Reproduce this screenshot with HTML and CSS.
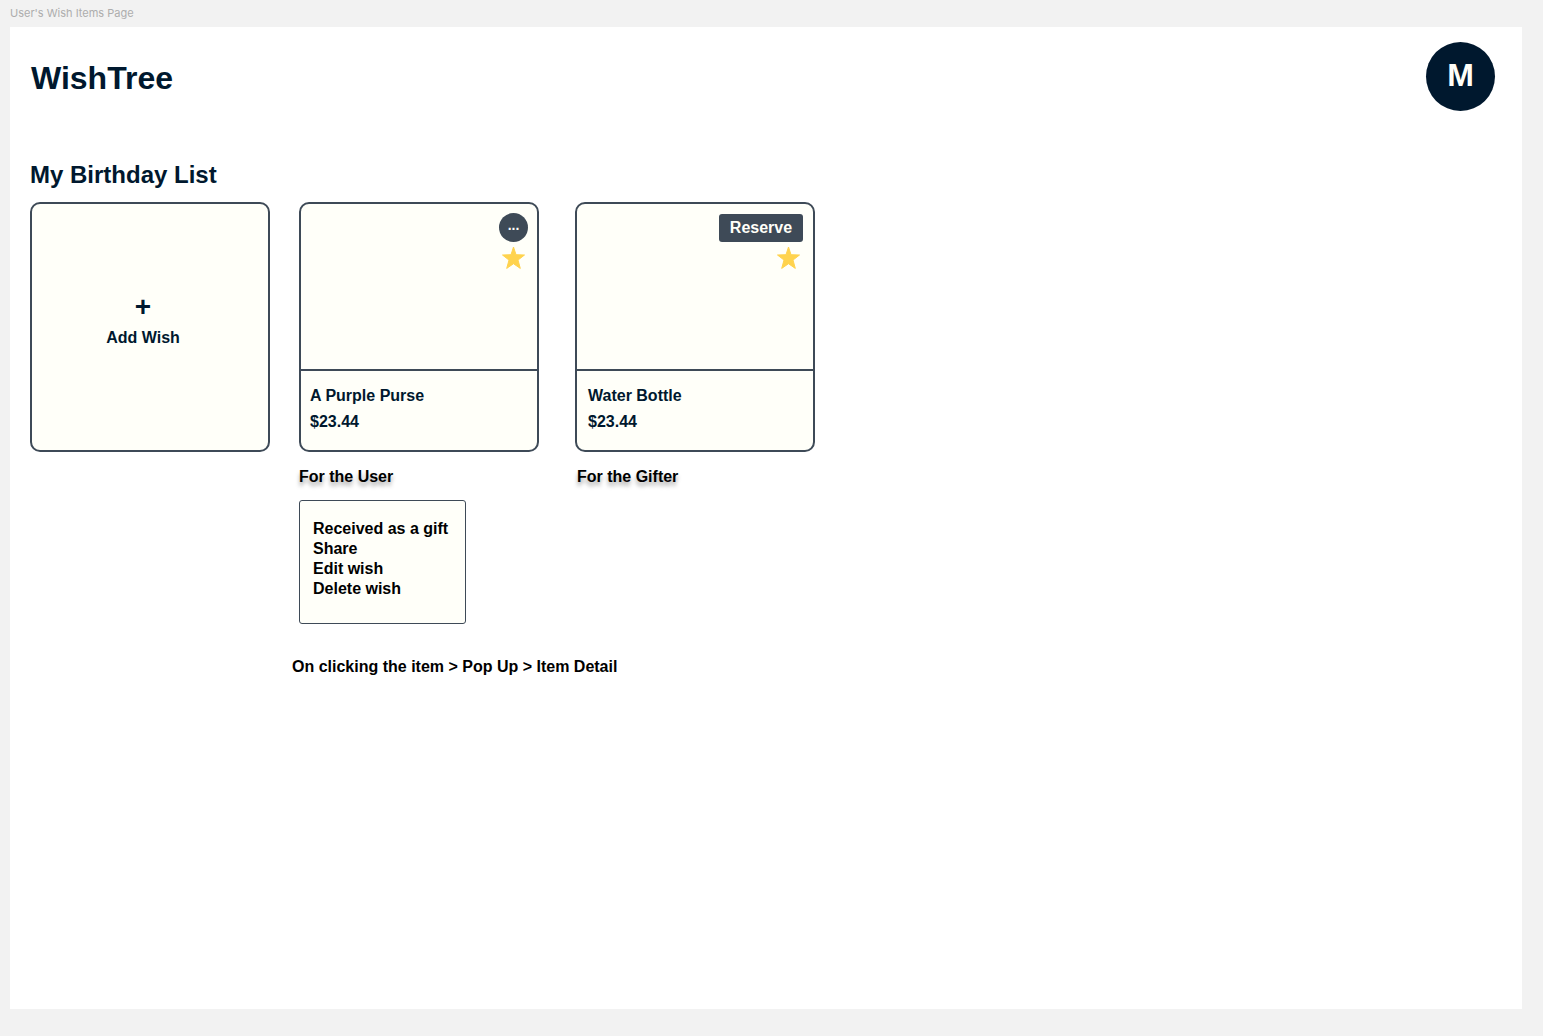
FILE: index.html
```html
<!DOCTYPE html>
<html lang="en">
<head>
  <meta charset="utf-8">
  <meta name="viewport" content="width=device-width, initial-scale=1">
  <title>WishTree</title>
  <link rel="stylesheet" href="styles.css">
</head>
<body>
  <p class="frame-label">User's Wish Items Page</p>
  <div class="frame">
    <header class="header">
      <h1 class="brand">WishTree</h1>
      <button class="avatar" type="button">M</button>
    </header>
    <main class="content">
      <h2 class="list-title">My Birthday List</h2>
      <div class="board">
        <button class="card add-card" type="button">
          <span class="plus">+</span>
          <span>Add Wish</span>
        </button>

        <section class="column">
          <article class="card">
            <div class="media">
              <button class="more" type="button">...</button>
              <svg class="star" viewBox="0 0 24 24" aria-hidden="true"><path d="M12.5 1 15 8.7 23.5 9 17 14.1 19.3 22.4 12.5 17.7 5.7 22.4 8 14.1 1.5 9 10 8.7Z"/></svg>
            </div>
            <div class="details">
              <h3 class="name">A Purple Purse</h3>
              <p class="price">$23.44</p>
            </div>
          </article>
          <p class="caption">For the User</p>
          <ul class="menu">
            <li><button type="button">Received as a gift</button></li>
            <li><button type="button">Share</button></li>
            <li><button type="button">Edit wish</button></li>
            <li><button type="button">Delete wish</button></li>
          </ul>
        </section>

        <section class="column gifter">
          <article class="card">
            <div class="media">
              <button class="reserve" type="button">Reserve</button>
              <svg class="star" viewBox="0 0 24 24" aria-hidden="true"><path d="M12.5 1 15 8.7 23.5 9 17 14.1 19.3 22.4 12.5 17.7 5.7 22.4 8 14.1 1.5 9 10 8.7Z"/></svg>
            </div>
            <div class="details">
              <h3 class="name">Water Bottle</h3>
              <p class="price">$23.44</p>
            </div>
          </article>
          <p class="caption">For the Gifter</p>
        </section>
      </div>
      <p class="note">On clicking the item &gt; Pop Up &gt; Item Detail</p>
    </main>
  </div>
</body>
</html>
```
FILE: styles.css
```css
:root {
  --navy: #00182e;
  --slate: #3e4a57;
  --ivory: #fffff9;
  --gold: #ffd34e;
}

* {
  box-sizing: border-box;
}

body {
  display: flex;
  flex-direction: column;
  min-height: 100vh;
  margin: 0;
  padding: 0 21px 27px 10px;
  background: #f2f2f2;
  color: #000;
  font: bold 16px/20px "Liberation Sans", Arial, sans-serif;
}

h1, h2, h3, p, ul {
  margin: 0;
  padding: 0;
  font-size: inherit;
}

button {
  padding: 0;
  border: 0;
  background: none;
  color: inherit;
  font: inherit;
  cursor: pointer;
}

.frame-label {
  height: 27px;
  color: #adadad;
  font: 11px/27px Inter, sans-serif;
}

.frame {
  flex: 1;
  padding: 15px 27px 20px 20px;
  background: #fff;
}

.header {
  display: flex;
  align-items: center;
  justify-content: space-between;
  margin-bottom: 49px;
}

.brand {
  padding: 2px 0 0 1px;
  color: var(--navy);
  font-size: 32px;
  line-height: 40px;
}

.avatar {
  width: 69px;
  height: 69px;
  padding-bottom: 4px;
  border-radius: 50%;
  background: var(--navy);
  color: var(--ivory);
  font-size: 32px;
  line-height: 40px;
}

.list-title {
  margin-bottom: 12px;
  color: var(--navy);
  font-size: 24px;
  line-height: 30px;
}

.board {
  display: flex;
  align-items: flex-start;
  flex-wrap: wrap;
}

.card {
  width: 240px;
  height: 250px;
  border: 2px solid var(--slate);
  border-radius: 10px;
  background: var(--ivory);
  color: var(--navy);
}

.add-card {
  display: flex;
  flex-direction: column;
  align-items: center;
  justify-content: center;
  gap: 5px;
  margin-right: 29px;
  padding: 0 14px 15px 0;
}

.plus {
  font-size: 28px;
  line-height: 32px;
}

.gifter {
  margin-left: 36px;
}

.media {
  display: flex;
  flex-direction: column;
  align-items: flex-end;
  gap: 4px;
  height: 167px;
  padding: 9px;
  border-bottom: 2px solid var(--slate);
}

.more {
  width: 29px;
  height: 29px;
  padding-bottom: 6px;
  border-radius: 50%;
  background: var(--slate);
  color: var(--ivory);
  font-size: 14px;
  line-height: 20px;
}

.reserve {
  width: 84px;
  height: 28px;
  border-radius: 3px;
  background: var(--slate);
  color: var(--ivory);
}

.star {
  width: 24px;
  height: 24px;
  margin-right: 3px;
  fill: var(--gold);
  stroke: var(--gold);
  stroke-linejoin: round;
}

.details {
  padding: 12px 9px;
  line-height: 26px;
}

.gifter .media {
  padding: 10px;
}

.gifter .details {
  padding: 12px 11px;
}

.caption {
  margin-top: 15px;
  text-shadow: 0 4px 4px rgba(0, 0, 0, 0.35);
}

.gifter .caption {
  padding-left: 2px;
}

.menu {
  width: 167px;
  margin-top: 13px;
  padding: 18px 13px 24px;
  border: 1px solid var(--slate);
  border-radius: 3px;
  background: var(--ivory);
  list-style: none;
}

.menu button {
  display: block;
  white-space: nowrap;
}

.note {
  margin: 33px 0 0 262px;
}
```
